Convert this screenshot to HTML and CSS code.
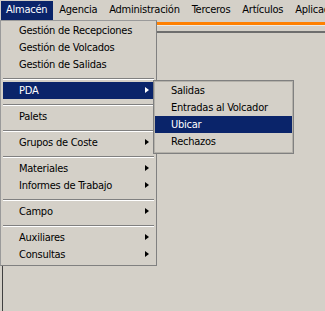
FILE: index.html
```html
<!DOCTYPE html>
<html lang="es">
<head>
<meta charset="utf-8">
<title>Menú</title>
<link rel="stylesheet" href="styles.css">
</head>
<body>
<div class="app">
  <nav class="menubar">
    <span class="mb-item active">Almacén</span>
    <span class="mb-item">Agencia</span>
    <span class="mb-item">Administración</span>
    <span class="mb-item">Terceros</span>
    <span class="mb-item">Artículos</span>
    <span class="mb-item">Aplicaciones</span>
  </nav>
  <div class="orange"></div>
  <div class="toolbar"></div>
  <div class="workspace"></div>

  <div class="menu main-menu">
    <div class="mi">Gestión de Recepciones</div>
    <div class="mi">Gestión de Volcados</div>
    <div class="mi">Gestión de Salidas</div>
    <div class="sep"></div>
    <div class="mi sub hl">PDA</div>
    <div class="sep"></div>
    <div class="mi">Palets</div>
    <div class="sep"></div>
    <div class="mi sub">Grupos de Coste</div>
    <div class="sep"></div>
    <div class="mi sub">Materiales</div>
    <div class="mi sub">Informes de Trabajo</div>
    <div class="sep"></div>
    <div class="mi sub">Campo</div>
    <div class="sep"></div>
    <div class="mi sub">Auxiliares</div>
    <div class="mi sub">Consultas</div>
  </div>

  <div class="menu sub-menu">
    <div class="mi">Salidas</div>
    <div class="mi">Entradas al Volcador</div>
    <div class="mi hl">Ubicar</div>
    <div class="mi">Rechazos</div>
  </div>
</div>
</body>
</html>
```

FILE: styles.css
```css
* { box-sizing: border-box; }
html, body {
  margin: 0;
  padding: 0;
  background: #d4d0c8;
  overflow: hidden;
}
body {
  font-family: "DejaVu Sans Condensed", Tahoma, "DejaVu Sans", sans-serif;
  font-size: 11px;
  letter-spacing: -0.25px;
  color: #000;
}
.app {
  position: relative;
  width: 325px;
  height: 311px;
  overflow: hidden;
}
.menubar {
  display: flex;
  height: 21px;
  padding-top: 1px;
  white-space: nowrap;
  overflow: hidden;
}
.mb-item {
  height: 19px;
  line-height: 18px;
  padding: 0 6px;
}
.mb-item:first-child {
  margin-left: 1px;
  padding-left: 5px;
}
.mb-item.active {
  background: #0a246a;
  color: #fff;
}
.orange {
  margin-top: 1px;
  height: 3px;
  background: #ff8000;
}
.toolbar {
  height: 8px;
  border-bottom: 2px solid #6e6e6e;
  border-top: 1px solid #ecebe6;
}
.workspace {
  height: 300px;
  margin-left: 2px;
  border-left: 1px solid #404040;
}
.menu {
  position: absolute;
  background: #d4d0c8;
  border: 1px solid #808080;
}
.main-menu {
  left: 0;
  top: 20px;
  width: 157px;
  height: 246px;
  padding: 1px 2px 2px 2px;
  border-left-color: #9a9a9a;
  border-top-color: #9a9a9a;
}
.sub-menu {
  left: 153px;
  top: 80px;
  width: 141px;
  height: 74px;
  padding: 1px 1px;
  box-shadow: inset 0 0 0 1px #b4b1aa;
}
.mi {
  position: relative;
  height: 17px;
  line-height: 17px;
  padding-left: 16px;
  white-space: nowrap;
}
.mi.hl {
  background: #0a246a;
  color: #fff;
}
.mi.sub::after {
  content: "";
  position: absolute;
  right: 5px;
  top: 5px;
  border-left: 4px solid #000;
  border-top: 3.5px solid transparent;
  border-bottom: 3.5px solid transparent;
}
.mi.sub.hl::after {
  border-left-color: #fff;
}
.sep {
  height: 9px;
  padding-top: 5px;
}
.sep::before {
  content: "";
  display: block;
  border-top: 1px solid #808080;
  border-bottom: 1px solid #fff;
}
```
